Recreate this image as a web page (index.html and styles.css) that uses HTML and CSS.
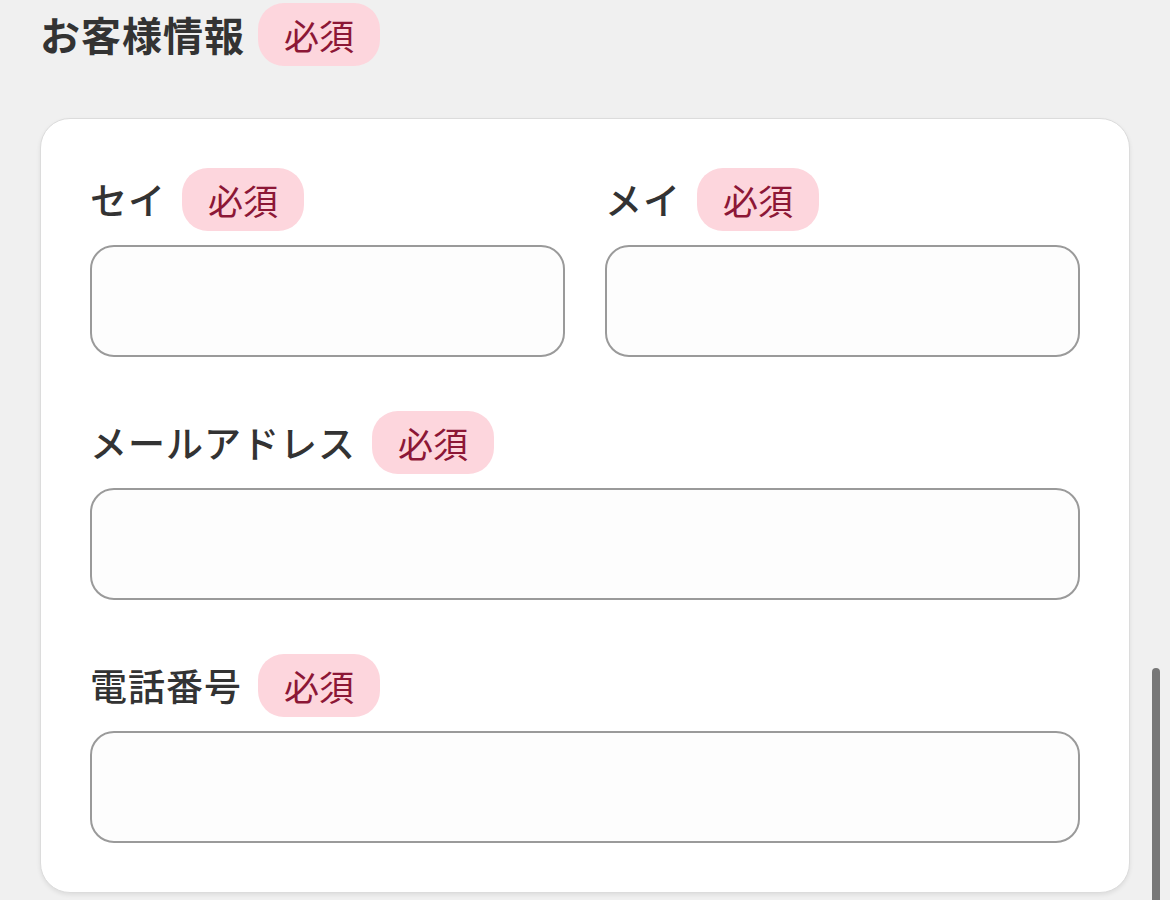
FILE: index.html
```html
<!DOCTYPE html>
<html lang="ja">
<head>
<meta charset="utf-8">
<title>お客様情報</title>
<link rel="stylesheet" href="styles.css">
</head>
<body>
<div class="page">
  <div class="section-head">
    <h2 class="section-title">お客様情報</h2>
    <span class="badge">必須</span>
  </div>
  <div class="card">
    <div class="row two">
      <div class="field">
        <div class="label-row"><span class="label">セイ</span><span class="badge">必須</span></div>
        <input class="input" type="text">
      </div>
      <div class="field">
        <div class="label-row"><span class="label">メイ</span><span class="badge">必須</span></div>
        <input class="input" type="text">
      </div>
    </div>
    <div class="row">
      <div class="field">
        <div class="label-row"><span class="label">メールアドレス</span><span class="badge">必須</span></div>
        <input class="input" type="email">
      </div>
    </div>
    <div class="row">
      <div class="field">
        <div class="label-row"><span class="label">電話番号</span><span class="badge">必須</span></div>
        <input class="input" type="tel">
      </div>
    </div>
  </div>
</div>
<div class="scroll-thumb"></div>
</body>
</html>
```

FILE: styles.css
```css
html, body {
  margin: 0;
  padding: 0;
  background: #f0f0f0;
  height: 100%;
  overflow: hidden;
}
body {
  font-family: "Noto Sans CJK JP", "Noto Sans", sans-serif;
  color: #333;
}
.page {
  padding: 3px 40px 0 40px;
}
.section-head {
  display: flex;
  align-items: center;
  gap: 13px;
  height: 62px;
  margin-bottom: 53px;
}
.section-title {
  margin: 0;
  font-size: 40px;
  font-weight: 700;
  letter-spacing: 1px;
  color: #333;
  line-height: 1;
}
.badge {
  display: inline-flex;
  align-items: center;
  justify-content: center;
  height: 63px;
  padding: 0 26px;
  box-sizing: border-box;
  border-radius: 26px;
  background: #fdd6dd;
  color: #8c1736;
  font-size: 35px;
  font-weight: 400;
  line-height: 1;
}
.card {
  width: 1090px;
  box-sizing: border-box;
  background: #fff;
  border: 1px solid #dcdcdc;
  border-radius: 30px;
  padding: 48px 49px 49px;
  box-shadow: 0 2px 4px rgba(0,0,0,0.08);
  display: flex;
  flex-direction: column;
  gap: 53px;
}
.row.two {
  display: grid;
  grid-template-columns: 1fr 1fr;
  column-gap: 40px;
}
.field {
  display: flex;
  flex-direction: column;
  gap: 14px;
}
.label-row {
  display: flex;
  align-items: center;
  gap: 16px;
  height: 64px;
}
.label {
  font-size: 37px;
  font-weight: 500;
  letter-spacing: 1px;
  color: #333;
  line-height: 1;
}
.input {
  display: block;
  width: 100%;
  height: 112px;
  box-sizing: border-box;
  border: 2px solid #9a9a9a;
  border-radius: 24px;
  background: #fdfdfd;
  font-size: 34px;
  padding: 0 24px;
  outline: none;
}
.scroll-thumb {
  position: fixed;
  left: 1152px;
  top: 668px;
  width: 8px;
  height: 260px;
  border-radius: 4px;
  background: #777;
}
```
